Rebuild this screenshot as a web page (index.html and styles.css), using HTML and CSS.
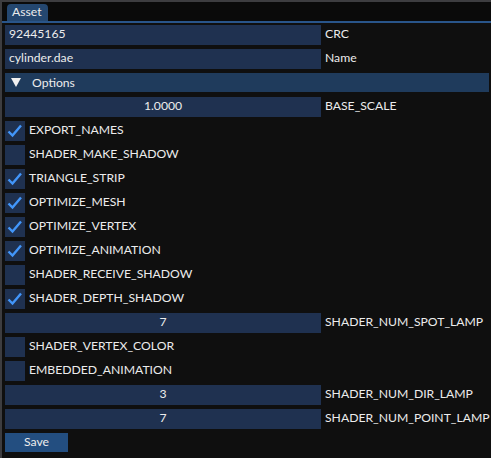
FILE: index.html
```html
<!DOCTYPE html>
<html>
<head>
<meta charset="utf-8">
<link rel="stylesheet" href="styles.css">
</head>
<body>
<div class="window">
  <div class="tabbar">
    <div class="tab">Asset</div>
  </div>
  <div class="content">
    <div class="row"><div class="frame text">92445165</div><span class="label">CRC</span></div>
    <div class="row"><div class="frame text">cylinder.dae</div><span class="label">Name</span></div>
    <div class="header"><span class="arrow"></span>Options</div>
    <div class="row"><div class="frame num">1.0000</div><span class="label">BASE_SCALE</span></div>
    <div class="row"><div class="check on"><svg viewBox="0 0 20 20"><polyline points="3.5,10.5 7.5,14.5 16,4.5"/></svg></div><span class="label">EXPORT_NAMES</span></div>
    <div class="row"><div class="check"></div><span class="label">SHADER_MAKE_SHADOW</span></div>
    <div class="row"><div class="check on"><svg viewBox="0 0 20 20"><polyline points="3.5,10.5 7.5,14.5 16,4.5"/></svg></div><span class="label">TRIANGLE_STRIP</span></div>
    <div class="row"><div class="check on"><svg viewBox="0 0 20 20"><polyline points="3.5,10.5 7.5,14.5 16,4.5"/></svg></div><span class="label">OPTIMIZE_MESH</span></div>
    <div class="row"><div class="check on"><svg viewBox="0 0 20 20"><polyline points="3.5,10.5 7.5,14.5 16,4.5"/></svg></div><span class="label">OPTIMIZE_VERTEX</span></div>
    <div class="row"><div class="check on"><svg viewBox="0 0 20 20"><polyline points="3.5,10.5 7.5,14.5 16,4.5"/></svg></div><span class="label">OPTIMIZE_ANIMATION</span></div>
    <div class="row"><div class="check"></div><span class="label">SHADER_RECEIVE_SHADOW</span></div>
    <div class="row"><div class="check on"><svg viewBox="0 0 20 20"><polyline points="3.5,10.5 7.5,14.5 16,4.5"/></svg></div><span class="label">SHADER_DEPTH_SHADOW</span></div>
    <div class="row"><div class="frame num">7</div><span class="label">SHADER_NUM_SPOT_LAMP</span></div>
    <div class="row"><div class="check"></div><span class="label">SHADER_VERTEX_COLOR</span></div>
    <div class="row"><div class="check"></div><span class="label">EMBEDDED_ANIMATION</span></div>
    <div class="row"><div class="frame num">3</div><span class="label">SHADER_NUM_DIR_LAMP</span></div>
    <div class="row"><div class="frame num">7</div><span class="label">SHADER_NUM_POINT_LAMP</span></div>
    <div class="row"><div class="button">Save</div></div>
  </div>
</div>
</body>
</html>
```

FILE: styles.css
```css
html, body {
  margin: 0;
  padding: 0;
  background: #0f0f0f;
}
body {
  width: 491px;
  height: 458px;
  overflow: hidden;
  font-family: "Lato", "DejaVu Sans", sans-serif;
  font-size: 12.2px;
  color: #ececec;
}
.window {
  width: 491px;
  height: 458px;
  box-sizing: border-box;
  border-top: 2px solid #3d3d40;
  border-left: 2px solid #3d3d40;
  background: #0f0f0f;
}
.tabbar {
  height: 19px;
  background: #0a0a0a;
  border-bottom: 2px solid #29558a;
  padding-left: 5px;
  display: flex;
  align-items: flex-end;
}
.tab {
  height: 17px;
  line-height: 15px;
  padding: 0 6px 0 5px;
  background: #244770;
  border-radius: 4px 4px 0 0;
}
.content {
  padding: 2px 2px 0 3px;
  display: flex;
  flex-direction: column;
  gap: 4px;
}
.row {
  display: flex;
  align-items: flex-start;
  height: 20px;
}
.frame {
  width: 316px;
  height: 20px;
  line-height: 18px;
  background: #1f3150;
  box-sizing: border-box;
  flex: none;
}
.frame.text {
  padding-left: 4px;
}
.frame.num {
  text-align: center;
}
.label {
  margin-left: 4px;
  white-space: nowrap;
  line-height: 18px;
  height: 20px;
}
.check {
  width: 20px;
  height: 20px;
  background: #1f3150;
  flex: none;
}
.check svg {
  width: 20px;
  height: 20px;
  display: block;
}
.check polyline {
  fill: none;
  stroke: #4296fa;
  stroke-width: 2.4;
  stroke-linecap: butt;
  stroke-linejoin: miter;
}
.header {
  height: 19px;
  line-height: 17px;
  background: #1f3b5c;
  width: 484px;
  display: flex;
  align-items: center;
  margin-bottom: 1px;
}
.arrow {
  width: 0;
  height: 0;
  border-left: 5px solid transparent;
  border-right: 5px solid transparent;
  border-top: 9px solid #f0f0f0;
  margin-left: 6px;
  margin-right: 11px;
}
.button {
  width: 63px;
  height: 19px;
  line-height: 17px;
  text-align: center;
  background: #234e80;
}
```
